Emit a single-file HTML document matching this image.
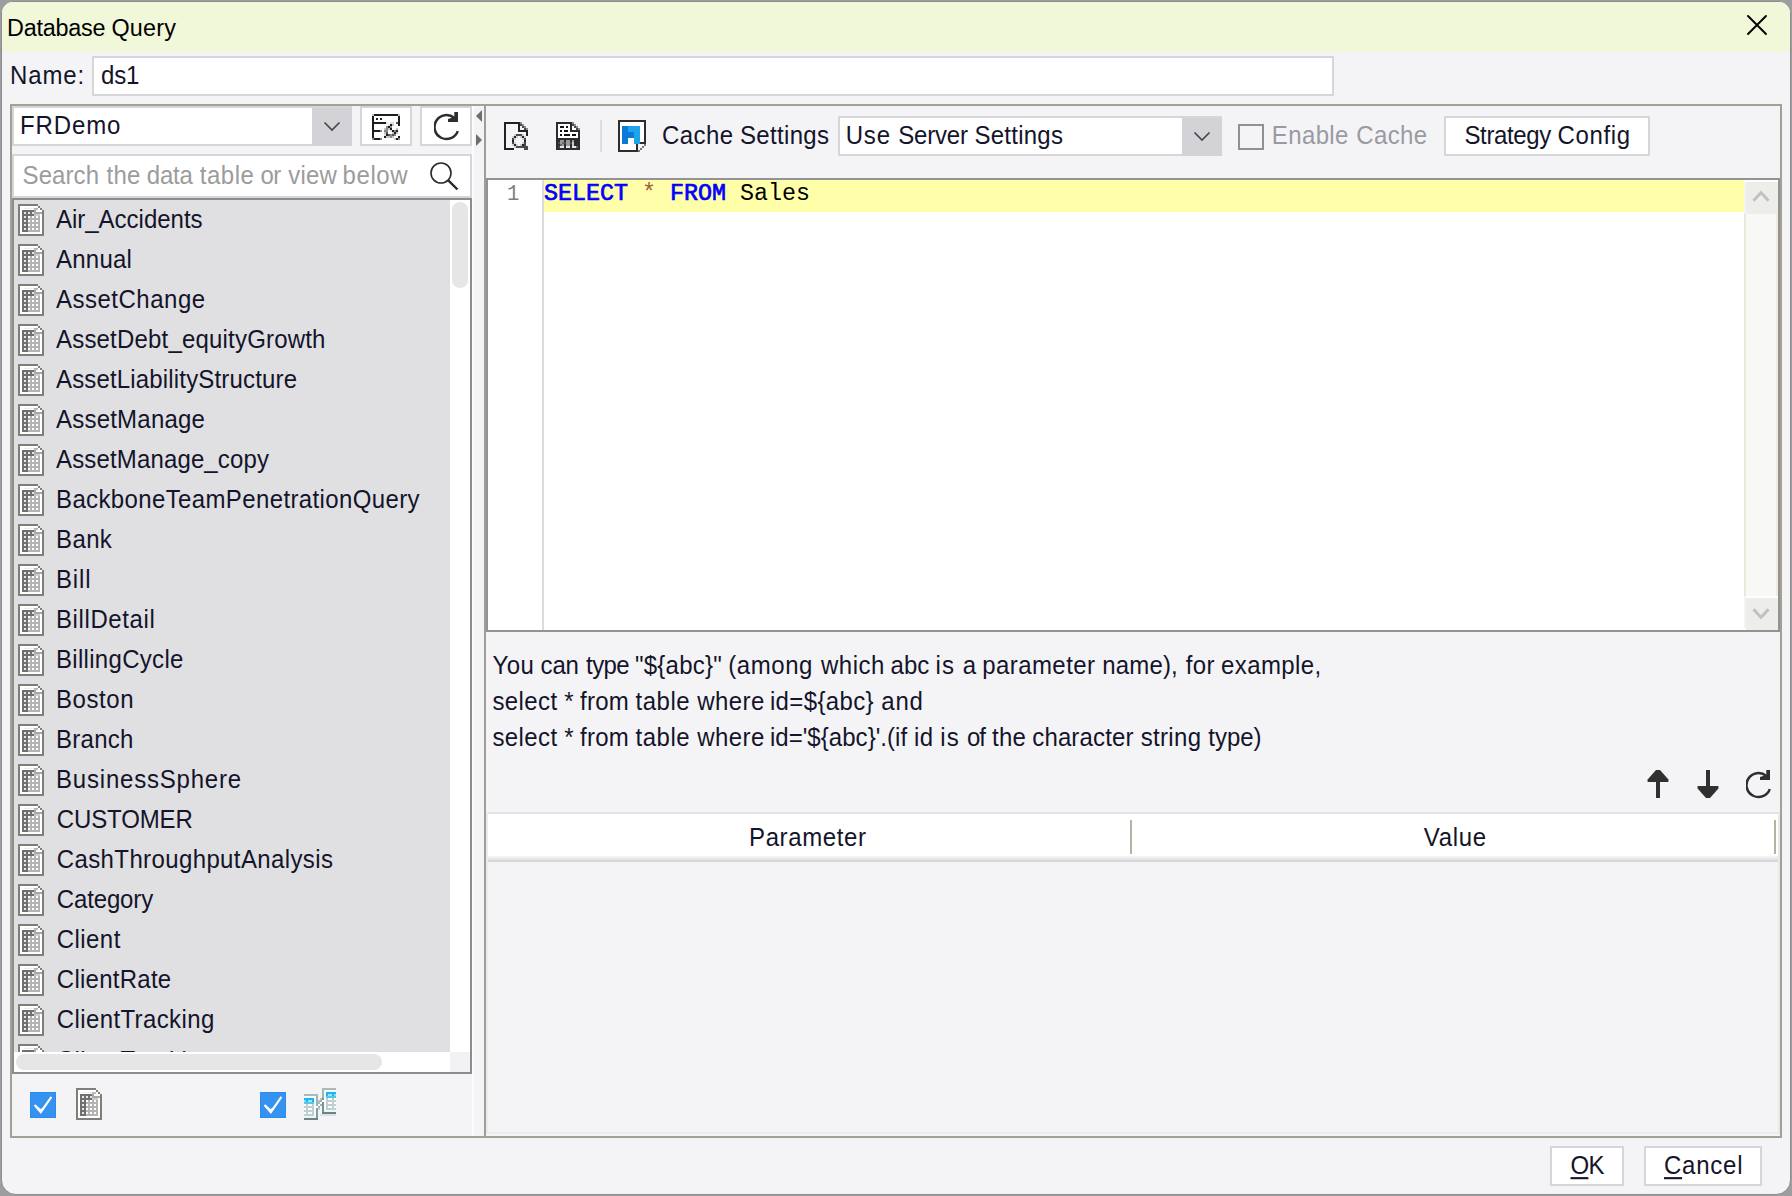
<!DOCTYPE html>
<html>
<head>
<meta charset="utf-8">
<title>Database Query</title>
<style>
html,body{margin:0;padding:0;}
body{width:1792px;height:1196px;overflow:hidden;background:#9d9d9f;position:relative;font-family:"Liberation Sans",sans-serif;font-size:24px;color:#16162a;}
.abs{position:absolute;}
.t{position:absolute;white-space:nowrap;line-height:28px;height:28px;}
#win{left:1px;top:1px;width:1788px;height:1192px;border:1px solid #8e8e91;border-radius:12px 12px 15px 15px;background:#f4f4f7;overflow:hidden;}
#titlebar{left:0;top:0;width:1792px;height:52px;background:#f1f7d9;}
.box{position:absolute;box-sizing:border-box;border:2px solid #d6d6da;background:#fff;}
.ln{position:absolute;}
</style>
</head>
<body>
<div id="win" class="abs"></div>
<div id="clip" class="abs" style="left:2px;top:2px;width:1788px;height:1192px;border-radius:11px 11px 14px 14px;overflow:hidden;">
<div class="abs" style="left:-2px;top:-2px;width:1792px;height:1196px;">

<!-- title bar -->
<div id="titlebar" class="abs"></div>
<div class="t" id="title_0" style="left:7.06px;top:13.89px;font-size:23.4px;letter-spacing:-0.238px;color:#000;transform:scaleY(1.02);transform-origin:0 22.11px;">Database</div><div class="t" id="title_1" style="left:111.50px;top:13.89px;font-size:23.4px;letter-spacing:0.170px;color:#000;transform:scaleY(1.02);transform-origin:0 22.11px;">Query</div>
<svg class="abs" style="left:1743px;top:11px;" width="28" height="28" viewBox="0 0 28 28"><path d="M5 5 L23 23 M23 5 L5 23" stroke="#000" stroke-width="1.9" stroke-linecap="round" fill="none"/></svg>

<!-- name row -->
<div class="t" id="namelbl" style="left:10.00px;top:61.68px;font-size:24px;letter-spacing:0.850px;color:#14142a;transform:scaleY(1.045);transform-origin:0 22.32px;">Name:</div>
<div class="box" style="left:92px;top:56px;width:1242px;height:40px;"></div>
<div class="t" id="ds1" style="left:101.00px;top:61.68px;font-size:24px;letter-spacing:-0.160px;color:#14142a;transform:scaleY(1.045);transform-origin:0 22.32px;">ds1</div>

<!-- outer split border -->
<div class="abs" style="left:10px;top:104px;width:1772px;height:1034px;box-sizing:border-box;border:2px solid #a3a194;"></div>

<!-- LEFT PANEL -->
<div id="left">
<svg width="0" height="0" style="position:absolute"><defs>
<symbol id="tbl" viewBox="0 0 26 32">
<path d="M0 0H20V2H22V4H24V6H26V32H0Z" fill="#7e7f79"/>
<path d="M2 2H20V4H22V6H24V30H2Z" fill="#fff"/>
<rect x="16" y="4" width="4" height="2" fill="#b9b9b9"/>
<rect x="16" y="6" width="2" height="4" fill="#a8a8a8"/>
<rect x="18" y="8" width="6" height="2" fill="#a8a8a8"/>
<rect x="6" y="4" width="10" height="1" fill="#ededed"/>
<rect x="4" y="6" width="12" height="6" fill="#6f6f6f"/>
<rect x="4" y="12" width="6" height="16" fill="#6f6f6f"/>
<rect x="10" y="12" width="12" height="16" fill="#b3b3b3"/>
<rect x="16" y="10" width="6" height="2" fill="#c9c9c9"/>
<g fill="#e6e6e6"><rect x="6" y="8" width="2" height="2"/><rect x="10" y="8" width="2" height="2"/><rect x="14" y="8" width="2" height="2"/>
<rect x="6" y="12" width="2" height="2"/><rect x="6" y="16" width="2" height="2"/><rect x="6" y="20" width="2" height="2"/><rect x="6" y="24" width="2" height="2"/></g>
<g fill="#fff"><rect x="10" y="12" width="2" height="2"/><rect x="14" y="12" width="2" height="2"/><rect x="18" y="12" width="2" height="2"/>
<rect x="10" y="16" width="2" height="2"/><rect x="14" y="16" width="2" height="2"/><rect x="18" y="16" width="2" height="2"/>
<rect x="10" y="20" width="2" height="2"/><rect x="14" y="20" width="2" height="2"/><rect x="18" y="20" width="2" height="2"/>
<rect x="10" y="24" width="2" height="2"/><rect x="14" y="24" width="2" height="2"/><rect x="18" y="24" width="2" height="2"/></g>
</symbol>
</defs></svg>
<div class="box" style="left:12px;top:106px;width:340px;height:40px;"></div>
<div class="abs" style="left:312px;top:108px;width:40px;height:38px;background:#d3d3d7;"></div>
<svg class="abs" style="left:320px;top:116px;" width="24" height="20" viewBox="0 0 24 20"><path d="M4.5 6.5 L12 14 L19.5 6.5" stroke="#484848" stroke-width="1.7" fill="none"/></svg>
<div class="t" id="frdemo" style="left:20.00px;top:111.68px;font-size:24px;letter-spacing:0.880px;color:#14142a;transform:scaleY(1.045);transform-origin:0 22.32px;">FRDemo</div>
<div class="box" style="left:360px;top:106px;width:52px;height:40px;"></div>
<div class="box" style="left:420px;top:106px;width:52px;height:40px;"></div><svg class="abs" id="icform" style="left:372px;top:114px;" width="28" height="26" viewBox="0 0 28 26" shape-rendering="crispEdges"><rect x="0" y="0" width="2" height="2" fill="#c4c4c4"/><rect x="2" y="0" width="2" height="2" fill="#1e1e1e"/><rect x="4" y="0" width="2" height="2" fill="#1e1e1e"/><rect x="6" y="0" width="2" height="2" fill="#1e1e1e"/><rect x="8" y="0" width="2" height="2" fill="#1e1e1e"/><rect x="10" y="0" width="2" height="2" fill="#1e1e1e"/><rect x="12" y="0" width="2" height="2" fill="#1e1e1e"/><rect x="14" y="0" width="2" height="2" fill="#1e1e1e"/><rect x="16" y="0" width="2" height="2" fill="#1e1e1e"/><rect x="18" y="0" width="2" height="2" fill="#1e1e1e"/><rect x="20" y="0" width="2" height="2" fill="#1e1e1e"/><rect x="22" y="0" width="2" height="2" fill="#1e1e1e"/><rect x="24" y="0" width="2" height="2" fill="#1e1e1e"/><rect x="26" y="0" width="2" height="2" fill="#c4c4c4"/><rect x="0" y="2" width="2" height="2" fill="#1e1e1e"/><rect x="0" y="4" width="2" height="2" fill="#1e1e1e"/><rect x="0" y="6" width="2" height="2" fill="#1e1e1e"/><rect x="0" y="8" width="2" height="2" fill="#1e1e1e"/><rect x="0" y="10" width="2" height="2" fill="#1e1e1e"/><rect x="0" y="12" width="2" height="2" fill="#1e1e1e"/><rect x="0" y="14" width="2" height="2" fill="#1e1e1e"/><rect x="0" y="16" width="2" height="2" fill="#1e1e1e"/><rect x="0" y="18" width="2" height="2" fill="#1e1e1e"/><rect x="0" y="20" width="2" height="2" fill="#1e1e1e"/><rect x="0" y="22" width="2" height="2" fill="#1e1e1e"/><rect x="26" y="2" width="2" height="2" fill="#1e1e1e"/><rect x="26" y="4" width="2" height="2" fill="#1e1e1e"/><rect x="26" y="6" width="2" height="2" fill="#1e1e1e"/><rect x="26" y="8" width="2" height="2" fill="#1e1e1e"/><rect x="26" y="10" width="2" height="2" fill="#1e1e1e"/><rect x="4" y="4" width="2" height="2" fill="#1e1e1e"/><rect x="8" y="4" width="2" height="2" fill="#1e1e1e"/><rect x="2" y="8" width="2" height="2" fill="#1e1e1e"/><rect x="4" y="8" width="2" height="2" fill="#1e1e1e"/><rect x="6" y="8" width="2" height="2" fill="#1e1e1e"/><rect x="8" y="8" width="2" height="2" fill="#1e1e1e"/><rect x="10" y="8" width="2" height="2" fill="#1e1e1e"/><rect x="12" y="8" width="2" height="2" fill="#1e1e1e"/><rect x="14" y="8" width="2" height="2" fill="#e2e2e2"/><rect x="18" y="8" width="2" height="2" fill="#e2e2e2"/><rect x="20" y="8" width="2" height="2" fill="#e2e2e2"/><rect x="24" y="8" width="2" height="2" fill="#555"/><rect x="16" y="10" width="2" height="2" fill="#e2e2e2"/><rect x="18" y="10" width="2" height="2" fill="#1e1e1e"/><rect x="20" y="10" width="2" height="2" fill="#c4c4c4"/><rect x="14" y="12" width="2" height="2" fill="#8a8a8a"/><rect x="16" y="12" width="2" height="2" fill="#1e1e1e"/><rect x="18" y="12" width="2" height="2" fill="#8a8a8a"/><rect x="12" y="14" width="2" height="2" fill="#c4c4c4"/><rect x="14" y="14" width="2" height="2" fill="#8a8a8a"/><rect x="16" y="14" width="2" height="2" fill="#c4c4c4"/><rect x="18" y="14" width="2" height="2" fill="#1e1e1e"/><rect x="24" y="14" width="2" height="2" fill="#c4c4c4"/><rect x="2" y="16" width="2" height="2" fill="#1e1e1e"/><rect x="4" y="16" width="2" height="2" fill="#1e1e1e"/><rect x="6" y="16" width="2" height="2" fill="#1e1e1e"/><rect x="8" y="16" width="2" height="2" fill="#8a8a8a"/><rect x="12" y="16" width="2" height="2" fill="#8a8a8a"/><rect x="14" y="16" width="2" height="2" fill="#8a8a8a"/><rect x="18" y="16" width="2" height="2" fill="#e2e2e2"/><rect x="20" y="16" width="2" height="2" fill="#1e1e1e"/><rect x="22" y="16" width="2" height="2" fill="#8a8a8a"/><rect x="24" y="16" width="2" height="2" fill="#1e1e1e"/><rect x="12" y="18" width="2" height="2" fill="#c4c4c4"/><rect x="14" y="18" width="2" height="2" fill="#555"/><rect x="20" y="18" width="2" height="2" fill="#c4c4c4"/><rect x="22" y="18" width="2" height="2" fill="#1e1e1e"/><rect x="24" y="18" width="2" height="2" fill="#c4c4c4"/><rect x="12" y="20" width="2" height="2" fill="#e2e2e2"/><rect x="14" y="20" width="2" height="2" fill="#1e1e1e"/><rect x="16" y="20" width="2" height="2" fill="#555"/><rect x="18" y="20" width="2" height="2" fill="#8a8a8a"/><rect x="20" y="20" width="2" height="2" fill="#555"/><rect x="22" y="20" width="2" height="2" fill="#8a8a8a"/><rect x="12" y="22" width="2" height="2" fill="#1e1e1e"/><rect x="14" y="22" width="2" height="2" fill="#c4c4c4"/><rect x="16" y="22" width="2" height="2" fill="#c4c4c4"/><rect x="18" y="22" width="2" height="2" fill="#8a8a8a"/><rect x="20" y="22" width="2" height="2" fill="#c4c4c4"/><rect x="26" y="22" width="2" height="2" fill="#1e1e1e"/><rect x="0" y="24" width="2" height="2" fill="#8a8a8a"/><rect x="2" y="24" width="2" height="2" fill="#1e1e1e"/><rect x="4" y="24" width="2" height="2" fill="#1e1e1e"/><rect x="6" y="24" width="2" height="2" fill="#1e1e1e"/><rect x="8" y="24" width="2" height="2" fill="#8a8a8a"/><rect x="22" y="24" width="2" height="2" fill="#c4c4c4"/><rect x="24" y="24" width="2" height="2" fill="#1e1e1e"/><rect x="26" y="24" width="2" height="2" fill="#8a8a8a"/></svg><svg class="abs" id="icref" style="left:434px;top:112px;" width="28" height="30" viewBox="0 0 28 30"><path d="M20.2 5.8 A12 12 0 1 0 23.8 19.1" stroke="#2e2e2e" stroke-width="2.5" fill="none"/><path d="M24 0 H20.3 V5 L14 7 V10 H24 Z" fill="#2e2e2e"/></svg>
<div class="box" style="left:12px;top:154px;width:460px;height:44px;"></div>
<div class="t" id="search_0" style="left:22.55px;top:161.68px;font-size:24px;letter-spacing:0.089px;color:#9c9c9c;transform:scaleY(1.045);transform-origin:0 22.32px;">Search</div><div class="t" id="search_1" style="left:106.60px;top:161.68px;font-size:24px;letter-spacing:0.235px;color:#9c9c9c;transform:scaleY(1.045);transform-origin:0 22.32px;">the</div><div class="t" id="search_2" style="left:146.75px;top:161.68px;font-size:24px;letter-spacing:-0.222px;color:#9c9c9c;transform:scaleY(1.045);transform-origin:0 22.32px;">data</div><div class="t" id="search_3" style="left:199.85px;top:161.68px;font-size:24px;letter-spacing:0.507px;color:#9c9c9c;transform:scaleY(1.045);transform-origin:0 22.32px;">table</div><div class="t" id="search_4" style="left:260.50px;top:161.68px;font-size:24px;letter-spacing:-0.507px;color:#9c9c9c;transform:scaleY(1.045);transform-origin:0 22.32px;">or</div><div class="t" id="search_5" style="left:288.30px;top:161.68px;font-size:24px;letter-spacing:0.204px;color:#9c9c9c;transform:scaleY(1.045);transform-origin:0 22.32px;">view</div><div class="t" id="search_6" style="left:342.40px;top:161.68px;font-size:24px;letter-spacing:0.650px;color:#9c9c9c;transform:scaleY(1.045);transform-origin:0 22.32px;">below</div>
<svg class="abs" style="left:426px;top:158px;" width="36" height="36" viewBox="0 0 36 36"><circle cx="15" cy="15" r="10" stroke="#2a2a2a" stroke-width="1.6" fill="none"/><path d="M22.3 22.3 L31.5 31.5" stroke="#2a2a2a" stroke-width="2.4"/></svg>
<div class="abs" id="list" style="left:12px;top:198px;width:460px;height:876px;box-sizing:border-box;border:2px solid #8d8d8d;background:#fff;overflow:hidden;">
<div class="abs" style="left:0;top:0;width:436px;height:852px;background:#e0e0e3;overflow:hidden;">
<svg class="abs" style="left:4px;top:4px;" width="26" height="32" shape-rendering="crispEdges"><use href="#tbl"/></svg><div class="t" id="li0" style="left:42.00px;top:5.68px;font-size:24px;letter-spacing:-0.017px;color:#14142a;transform:scaleY(1.045);transform-origin:0 22.32px;">Air_Accidents</div>
<svg class="abs" style="left:4px;top:44px;" width="26" height="32" shape-rendering="crispEdges"><use href="#tbl"/></svg><div class="t" id="li1" style="left:42.00px;top:45.68px;font-size:24px;letter-spacing:0.240px;color:#14142a;transform:scaleY(1.045);transform-origin:0 22.32px;">Annual</div>
<svg class="abs" style="left:4px;top:84px;" width="26" height="32" shape-rendering="crispEdges"><use href="#tbl"/></svg><div class="t" id="li2" style="left:42.00px;top:85.68px;font-size:24px;letter-spacing:0.500px;color:#14142a;transform:scaleY(1.045);transform-origin:0 22.32px;">AssetChange</div>
<svg class="abs" style="left:4px;top:124px;" width="26" height="32" shape-rendering="crispEdges"><use href="#tbl"/></svg><div class="t" id="li3" style="left:42.00px;top:125.68px;font-size:24px;letter-spacing:0.190px;color:#14142a;transform:scaleY(1.045);transform-origin:0 22.32px;">AssetDebt_equityGrowth</div>
<svg class="abs" style="left:4px;top:164px;" width="26" height="32" shape-rendering="crispEdges"><use href="#tbl"/></svg><div class="t" id="li4" style="left:42.00px;top:165.68px;font-size:24px;letter-spacing:0.164px;color:#14142a;transform:scaleY(1.045);transform-origin:0 22.32px;">AssetLiabilityStructure</div>
<svg class="abs" style="left:4px;top:204px;" width="26" height="32" shape-rendering="crispEdges"><use href="#tbl"/></svg><div class="t" id="li5" style="left:42.00px;top:205.68px;font-size:24px;letter-spacing:0.220px;color:#14142a;transform:scaleY(1.045);transform-origin:0 22.32px;">AssetManage</div>
<svg class="abs" style="left:4px;top:244px;" width="26" height="32" shape-rendering="crispEdges"><use href="#tbl"/></svg><div class="t" id="li6" style="left:42.00px;top:245.68px;font-size:24px;letter-spacing:0.147px;color:#14142a;transform:scaleY(1.045);transform-origin:0 22.32px;">AssetManage_copy</div>
<svg class="abs" style="left:4px;top:284px;" width="26" height="32" shape-rendering="crispEdges"><use href="#tbl"/></svg><div class="t" id="li7" style="left:42.00px;top:285.68px;font-size:24px;letter-spacing:0.369px;color:#14142a;transform:scaleY(1.045);transform-origin:0 22.32px;">BackboneTeamPenetrationQuery</div>
<svg class="abs" style="left:4px;top:324px;" width="26" height="32" shape-rendering="crispEdges"><use href="#tbl"/></svg><div class="t" id="li8" style="left:42.00px;top:325.68px;font-size:24px;letter-spacing:0.387px;color:#14142a;transform:scaleY(1.045);transform-origin:0 22.32px;">Bank</div>
<svg class="abs" style="left:4px;top:364px;" width="26" height="32" shape-rendering="crispEdges"><use href="#tbl"/></svg><div class="t" id="li9" style="left:42.00px;top:365.68px;font-size:24px;letter-spacing:0.853px;color:#14142a;transform:scaleY(1.045);transform-origin:0 22.32px;">Bill</div>
<svg class="abs" style="left:4px;top:404px;" width="26" height="32" shape-rendering="crispEdges"><use href="#tbl"/></svg><div class="t" id="li10" style="left:42.00px;top:405.68px;font-size:24px;letter-spacing:0.596px;color:#14142a;transform:scaleY(1.045);transform-origin:0 22.32px;">BillDetail</div>
<svg class="abs" style="left:4px;top:444px;" width="26" height="32" shape-rendering="crispEdges"><use href="#tbl"/></svg><div class="t" id="li11" style="left:42.00px;top:445.68px;font-size:24px;letter-spacing:0.305px;color:#14142a;transform:scaleY(1.045);transform-origin:0 22.32px;">BillingCycle</div>
<svg class="abs" style="left:4px;top:484px;" width="26" height="32" shape-rendering="crispEdges"><use href="#tbl"/></svg><div class="t" id="li12" style="left:42.00px;top:485.68px;font-size:24px;letter-spacing:0.552px;color:#14142a;transform:scaleY(1.045);transform-origin:0 22.32px;">Boston</div>
<svg class="abs" style="left:4px;top:524px;" width="26" height="32" shape-rendering="crispEdges"><use href="#tbl"/></svg><div class="t" id="li13" style="left:42.00px;top:525.68px;font-size:24px;letter-spacing:0.272px;color:#14142a;transform:scaleY(1.045);transform-origin:0 22.32px;">Branch</div>
<svg class="abs" style="left:4px;top:564px;" width="26" height="32" shape-rendering="crispEdges"><use href="#tbl"/></svg><div class="t" id="li14" style="left:42.00px;top:565.68px;font-size:24px;letter-spacing:0.797px;color:#14142a;transform:scaleY(1.045);transform-origin:0 22.32px;">BusinessSphere</div>
<svg class="abs" style="left:4px;top:604px;" width="26" height="32" shape-rendering="crispEdges"><use href="#tbl"/></svg><div class="t" id="li15" style="left:42.80px;top:605.68px;font-size:24px;letter-spacing:-0.137px;color:#14142a;transform:scaleY(1.045);transform-origin:0 22.32px;">CUSTOMER</div>
<svg class="abs" style="left:4px;top:644px;" width="26" height="32" shape-rendering="crispEdges"><use href="#tbl"/></svg><div class="t" id="li16" style="left:42.80px;top:645.68px;font-size:24px;letter-spacing:0.379px;color:#14142a;transform:scaleY(1.045);transform-origin:0 22.32px;">CashThroughputAnalysis</div>
<svg class="abs" style="left:4px;top:684px;" width="26" height="32" shape-rendering="crispEdges"><use href="#tbl"/></svg><div class="t" id="li17" style="left:42.80px;top:685.68px;font-size:24px;letter-spacing:-0.149px;color:#14142a;transform:scaleY(1.045);transform-origin:0 22.32px;">Category</div>
<svg class="abs" style="left:4px;top:724px;" width="26" height="32" shape-rendering="crispEdges"><use href="#tbl"/></svg><div class="t" id="li18" style="left:42.80px;top:725.68px;font-size:24px;letter-spacing:0.432px;color:#14142a;transform:scaleY(1.045);transform-origin:0 22.32px;">Client</div>
<svg class="abs" style="left:4px;top:764px;" width="26" height="32" shape-rendering="crispEdges"><use href="#tbl"/></svg><div class="t" id="li19" style="left:42.80px;top:765.68px;font-size:24px;letter-spacing:0.262px;color:#14142a;transform:scaleY(1.045);transform-origin:0 22.32px;">ClientRate</div>
<svg class="abs" style="left:4px;top:804px;" width="26" height="32" shape-rendering="crispEdges"><use href="#tbl"/></svg><div class="t" id="li20" style="left:42.80px;top:805.68px;font-size:24px;letter-spacing:0.382px;color:#14142a;transform:scaleY(1.045);transform-origin:0 22.32px;">ClientTracking</div>
<svg class="abs" style="left:4px;top:844px;" width="26" height="32" shape-rendering="crispEdges"><use href="#tbl"/></svg><div class="t" id="li21" style="left:42.80px;top:845.68px;font-size:24px;letter-spacing:0.382px;color:#14142a;transform:scaleY(1.0);transform-origin:0 22.32px;">ClientTracking</div>
</div>
<div class="abs" style="left:438px;top:2px;width:16px;height:86px;border-radius:8px;background:#e6e6e6;"></div>
<div class="abs" style="left:2px;top:854px;width:366px;height:16px;border-radius:8px;background:#e6e6e6;"></div>
<div class="abs" style="left:436px;top:852px;width:20px;height:20px;background:#f2f2f5;"></div>
</div>
<svg class="abs" style="left:30px;top:1092px;" width="26" height="26" viewBox="0 0 26 26"><rect width="26" height="26" fill="#2a8cee"/><rect x="1" y="1" width="24" height="24" fill="#3592ef"/><path d="M4.6 13 L10.8 20.2 L21.4 4.8" stroke="#fff" stroke-width="2.1" fill="none"/><path d="M6 13 L10.8 19 L13.2 15.6 L10.6 17 Z" fill="#fff"/></svg>
<svg class="abs" style="left:76px;top:1088px;" width="26" height="32" shape-rendering="crispEdges"><use href="#tbl"/></svg>
<svg class="abs" style="left:260px;top:1092px;" width="26" height="26" viewBox="0 0 26 26"><rect width="26" height="26" fill="#2a8cee"/><rect x="1" y="1" width="24" height="24" fill="#3592ef"/><path d="M4.6 13 L10.8 20.2 L21.4 4.8" stroke="#fff" stroke-width="2.1" fill="none"/><path d="M6 13 L10.8 19 L13.2 15.6 L10.6 17 Z" fill="#fff"/></svg>
<svg class="abs" id="viewicon" style="left:304px;top:1088px;" width="32" height="32" viewBox="0 0 32 32" shape-rendering="crispEdges"><rect x="0" y="6" width="14" height="2" fill="#aab9b9"/><rect x="12" y="8" width="2" height="10" fill="#a3b3b3"/><rect x="12" y="18" width="2" height="12" fill="#8a9b9b"/><rect x="0" y="8" width="12" height="22" fill="#f2fdfd"/><rect x="0" y="10" width="10" height="4" fill="#20b3f1"/><rect x="0" y="14" width="10" height="2" fill="#62c1e6"/><rect x="0" y="12" width="2" height="2" fill="#7fe0ff"/><rect x="4" y="12" width="4" height="2" fill="#8eeaff"/><rect x="0" y="16" width="10" height="12" fill="#c0cfcf"/><rect x="0" y="16" width="2" height="2" fill="#fff"/><rect x="4" y="16" width="4" height="2" fill="#fff"/><rect x="0" y="20" width="2" height="2" fill="#fff"/><rect x="4" y="20" width="4" height="2" fill="#fff"/><rect x="0" y="24" width="2" height="2" fill="#fff"/><rect x="4" y="24" width="4" height="2" fill="#fff"/><rect x="0" y="28" width="12" height="2" fill="#e6f8f8"/><rect x="0" y="30" width="14" height="2" fill="#6f8282"/><rect x="18" y="0" width="14" height="2" fill="#aab9b9"/><rect x="18" y="2" width="2" height="8" fill="#a3b3b3"/><rect x="18" y="10" width="2" height="14" fill="#7f9191"/><rect x="20" y="2" width="12" height="22" fill="#f2fdfd"/><rect x="22" y="4" width="10" height="4" fill="#20b3f1"/><rect x="22" y="8" width="10" height="2" fill="#62c1e6"/><rect x="24" y="6" width="4" height="2" fill="#8eeaff"/><rect x="30" y="6" width="2" height="2" fill="#7fe0ff"/><rect x="22" y="10" width="10" height="12" fill="#c0cfcf"/><rect x="24" y="10" width="4" height="2" fill="#fff"/><rect x="30" y="10" width="2" height="2" fill="#fff"/><rect x="24" y="14" width="4" height="2" fill="#fff"/><rect x="30" y="14" width="2" height="2" fill="#fff"/><rect x="24" y="18" width="4" height="2" fill="#fff"/><rect x="30" y="18" width="2" height="2" fill="#fff"/><rect x="20" y="22" width="12" height="2" fill="#e6f8f8"/><rect x="18" y="24" width="14" height="2" fill="#6f8282"/><rect x="16" y="26" width="16" height="2" fill="#e0e0e2"/><rect x="14" y="12" width="2" height="2" fill="#b5c3c3"/><rect x="16" y="10" width="2" height="2" fill="#b5c3c3"/><rect x="14" y="14" width="4" height="2" fill="#aebcbc"/><rect x="16" y="12" width="2" height="2" fill="#9fb0b0"/><rect x="16" y="14" width="2" height="2" fill="#fff"/><rect x="14" y="16" width="2" height="2" fill="#fff"/><rect x="16" y="16" width="2" height="2" fill="#a3b3b3"/><rect x="18" y="12" width="2" height="2" fill="#fff"/><rect x="12" y="18" width="2" height="2" fill="#fff"/><rect x="14" y="18" width="2" height="2" fill="#a3b3b3"/><rect x="14" y="20" width="2" height="2" fill="#c5d0d0"/></svg>
</div>

<!-- SPLITTER -->
<div id="split">
<div class="abs" style="left:472px;top:106px;width:2px;height:1030px;background:#fcfcfd;"></div>
<svg class="abs" style="left:475px;top:108px;" width="8" height="40" viewBox="0 0 8 40"><path d="M7 2 V14 L1 8 Z" fill="#6e6e6e"/><path d="M1 26 V38 L7 32 Z" fill="#6e6e6e"/></svg>
</div>

<!-- RIGHT PANEL -->
<div id="right">
<div class="abs" style="left:484px;top:106px;width:2px;height:1030px;background:#9e9d96;"></div>
<svg class="abs" id="ic1" style="left:504px;top:122px;" width="24" height="28" viewBox="0 0 24 28" shape-rendering="crispEdges"><rect x="0" y="0" width="2" height="2" fill="#222"/><rect x="2" y="0" width="2" height="2" fill="#222"/><rect x="4" y="0" width="2" height="2" fill="#222"/><rect x="6" y="0" width="2" height="2" fill="#222"/><rect x="8" y="0" width="2" height="2" fill="#222"/><rect x="10" y="0" width="2" height="2" fill="#222"/><rect x="12" y="0" width="2" height="2" fill="#222"/><rect x="14" y="0" width="2" height="2" fill="#222"/><rect x="16" y="0" width="2" height="2" fill="#8c8c8c"/><rect x="0" y="2" width="2" height="2" fill="#222"/><rect x="0" y="4" width="2" height="2" fill="#222"/><rect x="0" y="6" width="2" height="2" fill="#222"/><rect x="0" y="8" width="2" height="2" fill="#222"/><rect x="0" y="10" width="2" height="2" fill="#222"/><rect x="0" y="12" width="2" height="2" fill="#222"/><rect x="0" y="14" width="2" height="2" fill="#222"/><rect x="0" y="16" width="2" height="2" fill="#222"/><rect x="0" y="18" width="2" height="2" fill="#222"/><rect x="0" y="20" width="2" height="2" fill="#222"/><rect x="0" y="22" width="2" height="2" fill="#222"/><rect x="0" y="24" width="2" height="2" fill="#222"/><rect x="14" y="2" width="2" height="2" fill="#222"/><rect x="14" y="4" width="2" height="2" fill="#222"/><rect x="14" y="6" width="2" height="2" fill="#222"/><rect x="16" y="2" width="2" height="2" fill="#4a4a4a"/><rect x="18" y="2" width="2" height="2" fill="#8c8c8c"/><rect x="18" y="4" width="2" height="2" fill="#4a4a4a"/><rect x="20" y="4" width="2" height="2" fill="#8c8c8c"/><rect x="20" y="6" width="2" height="2" fill="#4a4a4a"/><rect x="22" y="6" width="2" height="2" fill="#8c8c8c"/><rect x="14" y="8" width="2" height="2" fill="#222"/><rect x="16" y="8" width="2" height="2" fill="#222"/><rect x="18" y="8" width="2" height="2" fill="#222"/><rect x="20" y="8" width="2" height="2" fill="#222"/><rect x="22" y="8" width="2" height="2" fill="#222"/><rect x="22" y="10" width="2" height="2" fill="#222"/><rect x="22" y="12" width="2" height="2" fill="#222"/><rect x="10" y="12" width="2" height="2" fill="#cfcfd2"/><rect x="12" y="12" width="2" height="2" fill="#4a4a4a"/><rect x="14" y="12" width="2" height="2" fill="#4a4a4a"/><rect x="16" y="12" width="2" height="2" fill="#4a4a4a"/><rect x="18" y="12" width="2" height="2" fill="#cfcfd2"/><rect x="8" y="14" width="2" height="2" fill="#cfcfd2"/><rect x="10" y="14" width="2" height="2" fill="#222"/><rect x="12" y="14" width="2" height="2" fill="#cfcfd2"/><rect x="16" y="14" width="2" height="2" fill="#cfcfd2"/><rect x="18" y="14" width="2" height="2" fill="#222"/><rect x="20" y="14" width="2" height="2" fill="#cfcfd2"/><rect x="8" y="16" width="2" height="2" fill="#4a4a4a"/><rect x="10" y="16" width="2" height="2" fill="#cfcfd2"/><rect x="18" y="16" width="2" height="2" fill="#cfcfd2"/><rect x="20" y="16" width="2" height="2" fill="#4a4a4a"/><rect x="8" y="18" width="2" height="2" fill="#222"/><rect x="20" y="18" width="2" height="2" fill="#222"/><rect x="8" y="20" width="2" height="2" fill="#4a4a4a"/><rect x="10" y="20" width="2" height="2" fill="#cfcfd2"/><rect x="18" y="20" width="2" height="2" fill="#cfcfd2"/><rect x="20" y="20" width="2" height="2" fill="#4a4a4a"/><rect x="8" y="22" width="2" height="2" fill="#cfcfd2"/><rect x="10" y="22" width="2" height="2" fill="#222"/><rect x="12" y="22" width="2" height="2" fill="#cfcfd2"/><rect x="16" y="22" width="2" height="2" fill="#cfcfd2"/><rect x="18" y="22" width="2" height="2" fill="#222"/><rect x="20" y="22" width="2" height="2" fill="#4a4a4a"/><rect x="10" y="24" width="2" height="2" fill="#cfcfd2"/><rect x="12" y="24" width="2" height="2" fill="#4a4a4a"/><rect x="14" y="24" width="2" height="2" fill="#4a4a4a"/><rect x="16" y="24" width="2" height="2" fill="#4a4a4a"/><rect x="18" y="24" width="2" height="2" fill="#4a4a4a"/><rect x="20" y="24" width="2" height="2" fill="#4a4a4a"/><rect x="22" y="24" width="2" height="2" fill="#4a4a4a"/><rect x="0" y="26" width="2" height="2" fill="#222"/><rect x="2" y="26" width="2" height="2" fill="#222"/><rect x="4" y="26" width="2" height="2" fill="#222"/><rect x="6" y="26" width="2" height="2" fill="#222"/><rect x="8" y="26" width="2" height="2" fill="#222"/><rect x="20" y="26" width="2" height="2" fill="#4a4a4a"/><rect x="22" y="26" width="2" height="2" fill="#4a4a4a"/></svg>
<svg class="abs" id="ic2" style="left:556px;top:122px;" width="24" height="28" viewBox="0 0 24 28" shape-rendering="crispEdges"><rect x="2" y="2" width="2" height="2" fill="#fff"/><rect x="4" y="2" width="2" height="2" fill="#fff"/><rect x="6" y="2" width="2" height="2" fill="#fff"/><rect x="8" y="2" width="2" height="2" fill="#fff"/><rect x="10" y="2" width="2" height="2" fill="#fff"/><rect x="12" y="2" width="2" height="2" fill="#fff"/><rect x="14" y="2" width="2" height="2" fill="#2c2c2c"/><rect x="2" y="4" width="2" height="2" fill="#fff"/><rect x="4" y="4" width="2" height="2" fill="#111"/><rect x="6" y="4" width="2" height="2" fill="#111"/><rect x="8" y="4" width="2" height="2" fill="#fff"/><rect x="10" y="4" width="2" height="2" fill="#111"/><rect x="12" y="4" width="2" height="2" fill="#fff"/><rect x="14" y="4" width="2" height="2" fill="#2c2c2c"/><rect x="16" y="4" width="2" height="2" fill="#fff"/><rect x="2" y="6" width="2" height="2" fill="#fff"/><rect x="4" y="6" width="2" height="2" fill="#fff"/><rect x="6" y="6" width="2" height="2" fill="#fff"/><rect x="8" y="6" width="2" height="2" fill="#fff"/><rect x="10" y="6" width="2" height="2" fill="#fff"/><rect x="12" y="6" width="2" height="2" fill="#fff"/><rect x="14" y="6" width="2" height="2" fill="#2c2c2c"/><rect x="16" y="6" width="2" height="2" fill="#fff"/><rect x="18" y="6" width="2" height="2" fill="#fff"/><rect x="2" y="8" width="2" height="2" fill="#fff"/><rect x="4" y="8" width="2" height="2" fill="#111"/><rect x="6" y="8" width="2" height="2" fill="#fff"/><rect x="8" y="8" width="2" height="2" fill="#111"/><rect x="10" y="8" width="2" height="2" fill="#111"/><rect x="12" y="8" width="2" height="2" fill="#fff"/><rect x="14" y="8" width="2" height="2" fill="#2c2c2c"/><rect x="16" y="8" width="2" height="2" fill="#2c2c2c"/><rect x="18" y="8" width="2" height="2" fill="#2c2c2c"/><rect x="20" y="8" width="2" height="2" fill="#2c2c2c"/><rect x="2" y="10" width="2" height="2" fill="#fff"/><rect x="4" y="10" width="2" height="2" fill="#fff"/><rect x="6" y="10" width="2" height="2" fill="#fff"/><rect x="8" y="10" width="2" height="2" fill="#fff"/><rect x="10" y="10" width="2" height="2" fill="#fff"/><rect x="12" y="10" width="2" height="2" fill="#fff"/><rect x="14" y="10" width="2" height="2" fill="#fff"/><rect x="16" y="10" width="2" height="2" fill="#fff"/><rect x="18" y="10" width="2" height="2" fill="#fff"/><rect x="20" y="10" width="2" height="2" fill="#fff"/><rect x="2" y="12" width="2" height="2" fill="#fff"/><rect x="4" y="12" width="2" height="2" fill="#111"/><rect x="6" y="12" width="2" height="2" fill="#fff"/><rect x="8" y="12" width="2" height="2" fill="#111"/><rect x="10" y="12" width="2" height="2" fill="#111"/><rect x="12" y="12" width="2" height="2" fill="#111"/><rect x="14" y="12" width="2" height="2" fill="#fff"/><rect x="16" y="12" width="2" height="2" fill="#111"/><rect x="18" y="12" width="2" height="2" fill="#111"/><rect x="20" y="12" width="2" height="2" fill="#fff"/><rect x="2" y="14" width="2" height="2" fill="#fff"/><rect x="4" y="14" width="2" height="2" fill="#fff"/><rect x="6" y="14" width="2" height="2" fill="#fff"/><rect x="8" y="14" width="2" height="2" fill="#fff"/><rect x="10" y="14" width="2" height="2" fill="#fff"/><rect x="12" y="14" width="2" height="2" fill="#fff"/><rect x="14" y="14" width="2" height="2" fill="#fff"/><rect x="16" y="14" width="2" height="2" fill="#fff"/><rect x="18" y="14" width="2" height="2" fill="#fff"/><rect x="20" y="14" width="2" height="2" fill="#fff"/><rect x="0" y="0" width="2" height="2" fill="#2c2c2c"/><rect x="2" y="0" width="2" height="2" fill="#2c2c2c"/><rect x="4" y="0" width="2" height="2" fill="#2c2c2c"/><rect x="6" y="0" width="2" height="2" fill="#2c2c2c"/><rect x="8" y="0" width="2" height="2" fill="#2c2c2c"/><rect x="10" y="0" width="2" height="2" fill="#2c2c2c"/><rect x="12" y="0" width="2" height="2" fill="#2c2c2c"/><rect x="14" y="0" width="2" height="2" fill="#2c2c2c"/><rect x="16" y="0" width="2" height="2" fill="#8c8c8c"/><rect x="0" y="2" width="2" height="2" fill="#2c2c2c"/><rect x="0" y="4" width="2" height="2" fill="#2c2c2c"/><rect x="0" y="6" width="2" height="2" fill="#2c2c2c"/><rect x="0" y="8" width="2" height="2" fill="#2c2c2c"/><rect x="0" y="10" width="2" height="2" fill="#2c2c2c"/><rect x="0" y="12" width="2" height="2" fill="#2c2c2c"/><rect x="0" y="14" width="2" height="2" fill="#2c2c2c"/><rect x="0" y="16" width="2" height="2" fill="#2c2c2c"/><rect x="0" y="18" width="2" height="2" fill="#2c2c2c"/><rect x="0" y="20" width="2" height="2" fill="#2c2c2c"/><rect x="0" y="22" width="2" height="2" fill="#2c2c2c"/><rect x="0" y="24" width="2" height="2" fill="#2c2c2c"/><rect x="0" y="26" width="2" height="2" fill="#2c2c2c"/><rect x="16" y="2" width="2" height="2" fill="#4a4a4a"/><rect x="18" y="2" width="2" height="2" fill="#8c8c8c"/><rect x="18" y="4" width="2" height="2" fill="#4a4a4a"/><rect x="20" y="4" width="2" height="2" fill="#8c8c8c"/><rect x="20" y="6" width="2" height="2" fill="#4a4a4a"/><rect x="22" y="6" width="2" height="2" fill="#8c8c8c"/><rect x="22" y="8" width="2" height="2" fill="#2c2c2c"/><rect x="22" y="10" width="2" height="2" fill="#2c2c2c"/><rect x="22" y="12" width="2" height="2" fill="#2c2c2c"/><rect x="22" y="14" width="2" height="2" fill="#2c2c2c"/><rect x="2" y="16" width="2" height="2" fill="#2c2c2c"/><rect x="4" y="16" width="2" height="2" fill="#2c2c2c"/><rect x="6" y="16" width="2" height="2" fill="#2c2c2c"/><rect x="8" y="16" width="2" height="2" fill="#2c2c2c"/><rect x="10" y="16" width="2" height="2" fill="#2c2c2c"/><rect x="12" y="16" width="2" height="2" fill="#2c2c2c"/><rect x="14" y="16" width="2" height="2" fill="#2c2c2c"/><rect x="16" y="16" width="2" height="2" fill="#2c2c2c"/><rect x="18" y="16" width="2" height="2" fill="#2c2c2c"/><rect x="20" y="16" width="2" height="2" fill="#2c2c2c"/><rect x="22" y="16" width="2" height="2" fill="#2c2c2c"/><rect x="2" y="18" width="2" height="2" fill="#2c2c2c"/><rect x="4" y="18" width="2" height="2" fill="#9a9a9a"/><rect x="6" y="18" width="2" height="2" fill="#9a9a9a"/><rect x="8" y="18" width="2" height="2" fill="#2c2c2c"/><rect x="10" y="18" width="2" height="2" fill="#9a9a9a"/><rect x="12" y="18" width="2" height="2" fill="#9a9a9a"/><rect x="14" y="18" width="2" height="2" fill="#2c2c2c"/><rect x="16" y="18" width="2" height="2" fill="#9a9a9a"/><rect x="18" y="18" width="2" height="2" fill="#2c2c2c"/><rect x="20" y="18" width="2" height="2" fill="#2c2c2c"/><rect x="22" y="18" width="2" height="2" fill="#2c2c2c"/><rect x="2" y="20" width="2" height="2" fill="#4a4a4a"/><rect x="4" y="20" width="2" height="2" fill="#9a9a9a"/><rect x="6" y="20" width="2" height="2" fill="#6a6a6a"/><rect x="8" y="20" width="2" height="2" fill="#4a4a4a"/><rect x="10" y="20" width="2" height="2" fill="#9a9a9a"/><rect x="12" y="20" width="2" height="2" fill="#9a9a9a"/><rect x="14" y="20" width="2" height="2" fill="#4a4a4a"/><rect x="16" y="20" width="2" height="2" fill="#c9c9c9"/><rect x="18" y="20" width="2" height="2" fill="#2c2c2c"/><rect x="20" y="20" width="2" height="2" fill="#2c2c2c"/><rect x="22" y="20" width="2" height="2" fill="#2c2c2c"/><rect x="2" y="22" width="2" height="2" fill="#2c2c2c"/><rect x="4" y="22" width="2" height="2" fill="#6a6a6a"/><rect x="6" y="22" width="2" height="2" fill="#9a9a9a"/><rect x="8" y="22" width="2" height="2" fill="#2c2c2c"/><rect x="10" y="22" width="2" height="2" fill="#9a9a9a"/><rect x="12" y="22" width="2" height="2" fill="#9a9a9a"/><rect x="14" y="22" width="2" height="2" fill="#2c2c2c"/><rect x="16" y="22" width="2" height="2" fill="#c9c9c9"/><rect x="18" y="22" width="2" height="2" fill="#2c2c2c"/><rect x="20" y="22" width="2" height="2" fill="#2c2c2c"/><rect x="22" y="22" width="2" height="2" fill="#2c2c2c"/><rect x="2" y="24" width="2" height="2" fill="#4a4a4a"/><rect x="4" y="24" width="2" height="2" fill="#e6e6e6"/><rect x="6" y="24" width="2" height="2" fill="#e6e6e6"/><rect x="8" y="24" width="2" height="2" fill="#2c2c2c"/><rect x="10" y="24" width="2" height="2" fill="#e6e6e6"/><rect x="12" y="24" width="2" height="2" fill="#e6e6e6"/><rect x="14" y="24" width="2" height="2" fill="#2c2c2c"/><rect x="16" y="24" width="2" height="2" fill="#e6e6e6"/><rect x="18" y="24" width="2" height="2" fill="#e6e6e6"/><rect x="20" y="24" width="2" height="2" fill="#6a6a6a"/><rect x="22" y="24" width="2" height="2" fill="#2c2c2c"/><rect x="2" y="26" width="2" height="2" fill="#2c2c2c"/><rect x="4" y="26" width="2" height="2" fill="#2c2c2c"/><rect x="6" y="26" width="2" height="2" fill="#2c2c2c"/><rect x="8" y="26" width="2" height="2" fill="#2c2c2c"/><rect x="10" y="26" width="2" height="2" fill="#2c2c2c"/><rect x="12" y="26" width="2" height="2" fill="#2c2c2c"/><rect x="14" y="26" width="2" height="2" fill="#2c2c2c"/><rect x="16" y="26" width="2" height="2" fill="#2c2c2c"/><rect x="18" y="26" width="2" height="2" fill="#2c2c2c"/><rect x="20" y="26" width="2" height="2" fill="#2c2c2c"/><rect x="22" y="26" width="2" height="2" fill="#2c2c2c"/></svg>
<div class="abs" style="left:600px;top:120px;width:2px;height:32px;background:#dcdce0;"></div>
<svg class="abs" id="ic3" style="left:618px;top:120px;" width="28" height="32" viewBox="0 0 28 32" shape-rendering="crispEdges"><path d="M0 0H28V24H20V32H0Z" fill="#2d2d2d"/><path d="M2 2H26V22H18V30H2Z" fill="#fff"/><g fill="#2d2d2d"><rect x="18" y="22" width="10" height="2"/><rect x="18" y="22" width="2" height="10"/></g><g fill="#777"><rect x="26" y="24" width="2" height="2"/><rect x="24" y="26" width="2" height="2"/><rect x="22" y="28" width="2" height="2"/><rect x="20" y="30" width="2" height="2"/></g><rect x="4" y="6" width="6" height="18" fill="#0b79d8"/><rect x="10" y="12" width="6" height="6" fill="#0b79d8"/><rect x="10" y="6" width="12" height="6" fill="#1ea4ea"/><rect x="16" y="12" width="6" height="12" fill="#1ea4ea"/></svg>
<div class="t" id="cachelbl_0" style="left:661.94px;top:121.68px;font-size:24px;letter-spacing:0.421px;color:#14142a;transform:scaleY(1.045);transform-origin:0 22.32px;">Cache</div><div class="t" id="cachelbl_1" style="left:740.05px;top:121.68px;font-size:24px;letter-spacing:0.314px;color:#14142a;transform:scaleY(1.045);transform-origin:0 22.32px;">Settings</div>
<div class="box" style="left:838px;top:116px;width:384px;height:40px;"></div>
<div class="abs" style="left:1182px;top:118px;width:40px;height:38px;background:#d3d3d7;"></div>
<svg class="abs" style="left:1190px;top:126px;" width="24" height="20" viewBox="0 0 24 20"><path d="M4.5 6.5 L12 14 L19.5 6.5" stroke="#484848" stroke-width="1.7" fill="none"/></svg>
<div class="t" id="usesrv_0" style="left:845.70px;top:121.68px;font-size:24px;letter-spacing:0.847px;color:#14142a;transform:scaleY(1.045);transform-origin:0 22.32px;">Use</div><div class="t" id="usesrv_1" style="left:898.16px;top:121.68px;font-size:24px;letter-spacing:-0.193px;color:#14142a;transform:scaleY(1.045);transform-origin:0 22.32px;">Server</div><div class="t" id="usesrv_2" style="left:974.44px;top:121.68px;font-size:24px;letter-spacing:0.251px;color:#14142a;transform:scaleY(1.045);transform-origin:0 22.32px;">Settings</div>
<div class="abs" style="left:1238px;top:124px;width:26px;height:26px;box-sizing:border-box;border:2px solid #909090;background:#f4f4f7;"></div>
<div class="t" id="encache_0" style="left:1271.75px;top:121.68px;font-size:24px;letter-spacing:0.391px;color:#9a9aa2;transform:scaleY(1.045);transform-origin:0 22.32px;">Enable</div><div class="t" id="encache_1" style="left:1356.30px;top:121.68px;font-size:24px;letter-spacing:0.350px;color:#9a9aa2;transform:scaleY(1.045);transform-origin:0 22.32px;">Cache</div>
<div class="box" style="left:1444px;top:116px;width:206px;height:40px;"></div>
<div class="t" id="strat_0" style="left:1464.44px;top:121.68px;font-size:24px;letter-spacing:-0.364px;color:#14142a;transform:scaleY(1.045);transform-origin:0 22.32px;">Strategy</div><div class="t" id="strat_1" style="left:1557.55px;top:121.68px;font-size:24px;letter-spacing:0.640px;color:#14142a;transform:scaleY(1.045);transform-origin:0 22.32px;">Config</div>
<div class="abs" id="editor" style="left:486px;top:178px;width:1294px;height:454px;box-sizing:border-box;border:2px solid #939393;background:#fff;overflow:hidden;">
<div class="abs" style="left:54px;top:0;width:2px;height:450px;background:#dcdcdc;"></div>
<div class="abs" style="left:56px;top:0;width:1200px;height:32px;background:#ffffaa;"></div>
<div class="abs" id="lnum" style="left:19px;top:-1px;font-family:'Liberation Mono',monospace;font-size:20.5px;line-height:32px;color:#7e7e7e;transform:scaleY(1.12);transform-origin:0 22px;">1</div>
<div class="abs" id="sql" style="left:56px;top:-2px;font-family:'Liberation Mono',monospace;font-size:23.33px;line-height:32px;white-space:pre;color:#000;"><span style="color:#0000ff;-webkit-text-stroke:0.7px #0000ff">SELECT</span> <span style="color:#a0623a">*</span> <span style="color:#0000ff;-webkit-text-stroke:0.7px #0000ff">FROM</span> Sales</div>
<div class="abs" style="left:1256px;top:0;width:34px;height:450px;background:#f8f8f6;"></div>
<div class="abs" style="left:1256px;top:0;width:2px;height:450px;background:#ebe8da;"></div>
<div class="abs" style="left:1288px;top:0;width:2px;height:450px;background:#f0ebde;"></div>
<div class="abs" style="left:1256px;top:0;width:34px;height:34px;background:#fff;"></div>
<div class="abs" style="left:1256px;top:2px;width:2px;height:32px;background:#f4f4f8;"></div>
<div class="abs" style="left:1258px;top:2px;width:32px;height:32px;background:#ededea;"></div>
<svg class="abs" style="left:1263px;top:9px;" width="22" height="16" viewBox="0 0 22 16"><path d="M2.5 11.8 L10 3.6 L17.5 11.8" stroke="#c1c1c1" stroke-width="3" fill="none"/></svg>
<div class="abs" style="left:1256px;top:416px;width:34px;height:34px;background:#fff;"></div>
<div class="abs" style="left:1256px;top:416px;width:2px;height:32px;background:#f4f4f8;"></div>
<div class="abs" style="left:1258px;top:418px;width:32px;height:32px;background:#ededea;"></div>
<svg class="abs" style="left:1263px;top:425px;" width="22" height="16" viewBox="0 0 22 16"><path d="M2.5 4.2 L10 12.4 L17.5 4.2" stroke="#c1c1c1" stroke-width="3" fill="none"/></svg>
</div>
<div class="t" id="h1_0" style="left:492.40px;top:651.68px;font-size:24px;letter-spacing:0.443px;color:#14142a;transform:scaleY(1.045);transform-origin:0 22.32px;">You</div><div class="t" id="h1_1" style="left:540.50px;top:651.68px;font-size:24px;letter-spacing:-0.124px;color:#14142a;transform:scaleY(1.045);transform-origin:0 22.32px;">can</div><div class="t" id="h1_2" style="left:586.10px;top:651.68px;font-size:24px;letter-spacing:-0.636px;color:#14142a;transform:scaleY(1.045);transform-origin:0 22.32px;">type</div><div class="t" id="h1_3" style="left:635.00px;top:651.68px;font-size:24px;letter-spacing:0.244px;color:#14142a;transform:scaleY(1.045);transform-origin:0 22.32px;">"${abc}"</div><div class="t" id="h1_4" style="left:728.35px;top:651.68px;font-size:24px;letter-spacing:0.534px;color:#14142a;transform:scaleY(1.045);transform-origin:0 22.32px;">(among</div><div class="t" id="h1_5" style="left:821.00px;top:651.68px;font-size:24px;letter-spacing:0.494px;color:#14142a;transform:scaleY(1.045);transform-origin:0 22.32px;">which</div><div class="t" id="h1_6" style="left:890.50px;top:651.68px;font-size:24px;letter-spacing:0.042px;color:#14142a;transform:scaleY(1.045);transform-origin:0 22.32px;">abc</div><div class="t" id="h1_7" style="left:935.40px;top:651.68px;font-size:24px;letter-spacing:1.368px;color:#14142a;transform:scaleY(1.045);transform-origin:0 22.32px;">is</div><div class="t" id="h1_8" style="left:962.75px;top:651.68px;font-size:24px;letter-spacing:-0.029px;color:#14142a;transform:scaleY(1.045);transform-origin:0 22.32px;">a</div><div class="t" id="h1_9" style="left:982.15px;top:651.68px;font-size:24px;letter-spacing:0.438px;color:#14142a;transform:scaleY(1.045);transform-origin:0 22.32px;">parameter</div><div class="t" id="h1_10" style="left:1102.15px;top:651.68px;font-size:24px;letter-spacing:0.188px;color:#14142a;transform:scaleY(1.045);transform-origin:0 22.32px;">name),</div><div class="t" id="h1_11" style="left:1185.85px;top:651.68px;font-size:24px;letter-spacing:0.355px;color:#14142a;transform:scaleY(1.045);transform-origin:0 22.32px;">for</div><div class="t" id="h1_12" style="left:1221.00px;top:651.68px;font-size:24px;letter-spacing:0.400px;color:#14142a;transform:scaleY(1.045);transform-origin:0 22.32px;">example,</div>
<div class="t" id="h2_0" style="left:492.40px;top:687.68px;font-size:24px;letter-spacing:0.396px;color:#14142a;transform:scaleY(1.045);transform-origin:0 22.32px;">select</div><div class="t" id="h2_1" style="left:564.35px;top:687.68px;font-size:24px;letter-spacing:-0.264px;color:#14142a;transform:scaleY(1.045);transform-origin:0 22.32px;">*</div><div class="t" id="h2_2" style="left:580.10px;top:687.68px;font-size:24px;letter-spacing:0.207px;color:#14142a;transform:scaleY(1.045);transform-origin:0 22.32px;">from</div><div class="t" id="h2_3" style="left:635.60px;top:687.68px;font-size:24px;letter-spacing:0.507px;color:#14142a;transform:scaleY(1.045);transform-origin:0 22.32px;">table</div><div class="t" id="h2_4" style="left:697.25px;top:687.68px;font-size:24px;letter-spacing:0.441px;color:#14142a;transform:scaleY(1.045);transform-origin:0 22.32px;">where</div><div class="t" id="h2_5" style="left:769.90px;top:687.68px;font-size:24px;letter-spacing:0.367px;color:#14142a;transform:scaleY(1.045);transform-origin:0 22.32px;">id=${abc}</div><div class="t" id="h2_6" style="left:881.25px;top:687.68px;font-size:24px;letter-spacing:0.800px;color:#14142a;transform:scaleY(1.045);transform-origin:0 22.32px;">and</div>
<div class="t" id="h3_0" style="left:492.40px;top:723.68px;font-size:24px;letter-spacing:0.396px;color:#14142a;transform:scaleY(1.045);transform-origin:0 22.32px;">select</div><div class="t" id="h3_1" style="left:564.35px;top:723.68px;font-size:24px;letter-spacing:-0.264px;color:#14142a;transform:scaleY(1.045);transform-origin:0 22.32px;">*</div><div class="t" id="h3_2" style="left:580.10px;top:723.68px;font-size:24px;letter-spacing:0.207px;color:#14142a;transform:scaleY(1.045);transform-origin:0 22.32px;">from</div><div class="t" id="h3_3" style="left:635.60px;top:723.68px;font-size:24px;letter-spacing:0.507px;color:#14142a;transform:scaleY(1.045);transform-origin:0 22.32px;">table</div><div class="t" id="h3_4" style="left:697.25px;top:723.68px;font-size:24px;letter-spacing:0.441px;color:#14142a;transform:scaleY(1.045);transform-origin:0 22.32px;">where</div><div class="t" id="h3_5" style="left:769.90px;top:723.68px;font-size:24px;letter-spacing:0.049px;color:#14142a;transform:scaleY(1.045);transform-origin:0 22.32px;">id='${abc}'.(if</div><div class="t" id="h3_6" style="left:913.90px;top:723.68px;font-size:24px;letter-spacing:0.421px;color:#14142a;transform:scaleY(1.045);transform-origin:0 22.32px;">id</div><div class="t" id="h3_7" style="left:940.18px;top:723.68px;font-size:24px;letter-spacing:1.143px;color:#14142a;transform:scaleY(1.045);transform-origin:0 22.32px;">is</div><div class="t" id="h3_8" style="left:967.00px;top:723.68px;font-size:24px;letter-spacing:-1.093px;color:#14142a;transform:scaleY(1.045);transform-origin:0 22.32px;">of</div><div class="t" id="h3_9" style="left:992.10px;top:723.68px;font-size:24px;letter-spacing:0.235px;color:#14142a;transform:scaleY(1.045);transform-origin:0 22.32px;">the</div><div class="t" id="h3_10" style="left:1032.25px;top:723.68px;font-size:24px;letter-spacing:0.143px;color:#14142a;transform:scaleY(1.045);transform-origin:0 22.32px;">character</div><div class="t" id="h3_11" style="left:1140.65px;top:723.68px;font-size:24px;letter-spacing:0.357px;color:#14142a;transform:scaleY(1.045);transform-origin:0 22.32px;">string</div><div class="t" id="h3_12" style="left:1208.35px;top:723.68px;font-size:24px;letter-spacing:-0.050px;color:#14142a;transform:scaleY(1.045);transform-origin:0 22.32px;">type)</div>
<svg class="abs" id="pup" style="left:1646px;top:768px;" width="24" height="32" viewBox="0 0 24 32"><path d="M10 2 H14 L22.4 11.6 V14 H1.6 V11.6 Z" fill="#303030"/><rect x="10" y="13" width="4" height="17" fill="#303030"/></svg>
<svg class="abs" id="pdn" style="left:1696px;top:768px;" width="24" height="32" viewBox="0 0 24 32"><path d="M10 30 H14 L22.4 20.4 V18 H1.6 V20.4 Z" fill="#303030"/><rect x="10" y="2" width="4" height="17" fill="#303030"/></svg>
<svg class="abs" id="pref" style="left:1746px;top:770px;" width="28" height="30" viewBox="0 0 28 30"><path d="M20.2 5.8 A12 12 0 1 0 23.8 19.1" stroke="#2e2e2e" stroke-width="2.5" fill="none"/><path d="M24 0 H20.3 V5 L14 7 V10 H24 Z" fill="#2e2e2e"/></svg>
<div class="abs" style="left:488px;top:812px;width:1290px;height:2px;background:#e3e3e6;"></div>
<div class="abs" style="left:488px;top:814px;width:1290px;height:42px;background:#fff;"></div>
<div class="abs" style="left:488px;top:856px;width:1290px;height:2px;background:#f2f2f3;"></div><div class="abs" style="left:488px;top:858px;width:1290px;height:2px;background:#e5e5e7;"></div><div class="abs" style="left:488px;top:860px;width:1290px;height:2px;background:#d6d6d8;"></div>
<div class="abs" style="left:1130px;top:820px;width:2px;height:34px;background:#b6b3a4;"></div>
<div class="abs" style="left:1774px;top:820px;width:2px;height:34px;background:#b6b3a4;"></div>
<div class="t" id="pparam" style="left:749.00px;top:823.68px;font-size:24px;letter-spacing:0.630px;color:#14142a;transform:scaleY(1.045);transform-origin:0 22.32px;">Parameter</div>
<div class="t" id="pvalue" style="left:1423.80px;top:823.68px;font-size:24px;letter-spacing:0.700px;color:#14142a;transform:scaleY(1.045);transform-origin:0 22.32px;">Value</div>
<div class="abs" style="left:486px;top:1132px;width:1294px;height:2px;background:#ececef;"></div><div class="abs" style="left:1778px;top:812px;width:2px;height:322px;background:#e9e9ec;"></div><div class="abs" style="left:486px;top:812px;width:2px;height:322px;background:#ebebee;"></div>
</div>

<!-- bottom buttons -->
<div class="box" style="left:1550px;top:1146px;width:74px;height:40px;"></div>
<div class="t" id="ok" style="left:1570.50px;top:1151.68px;font-size:24px;letter-spacing:-0.800px;color:#14142a;transform:scaleY(1.045);transform-origin:0 22.32px;"><span style="text-decoration:underline;text-decoration-thickness:2px;text-underline-offset:3px;text-decoration-skip-ink:none;">O</span>K</div>
<div class="box" style="left:1644px;top:1146px;width:118px;height:40px;"></div>
<div class="t" id="cancel" style="left:1664.00px;top:1151.68px;font-size:24px;letter-spacing:0.760px;color:#14142a;transform:scaleY(1.045);transform-origin:0 22.32px;"><span style="text-decoration:underline;text-decoration-thickness:2px;text-underline-offset:3px;text-decoration-skip-ink:none;">C</span>ancel</div>

</div>
</div>
</body>
</html>
